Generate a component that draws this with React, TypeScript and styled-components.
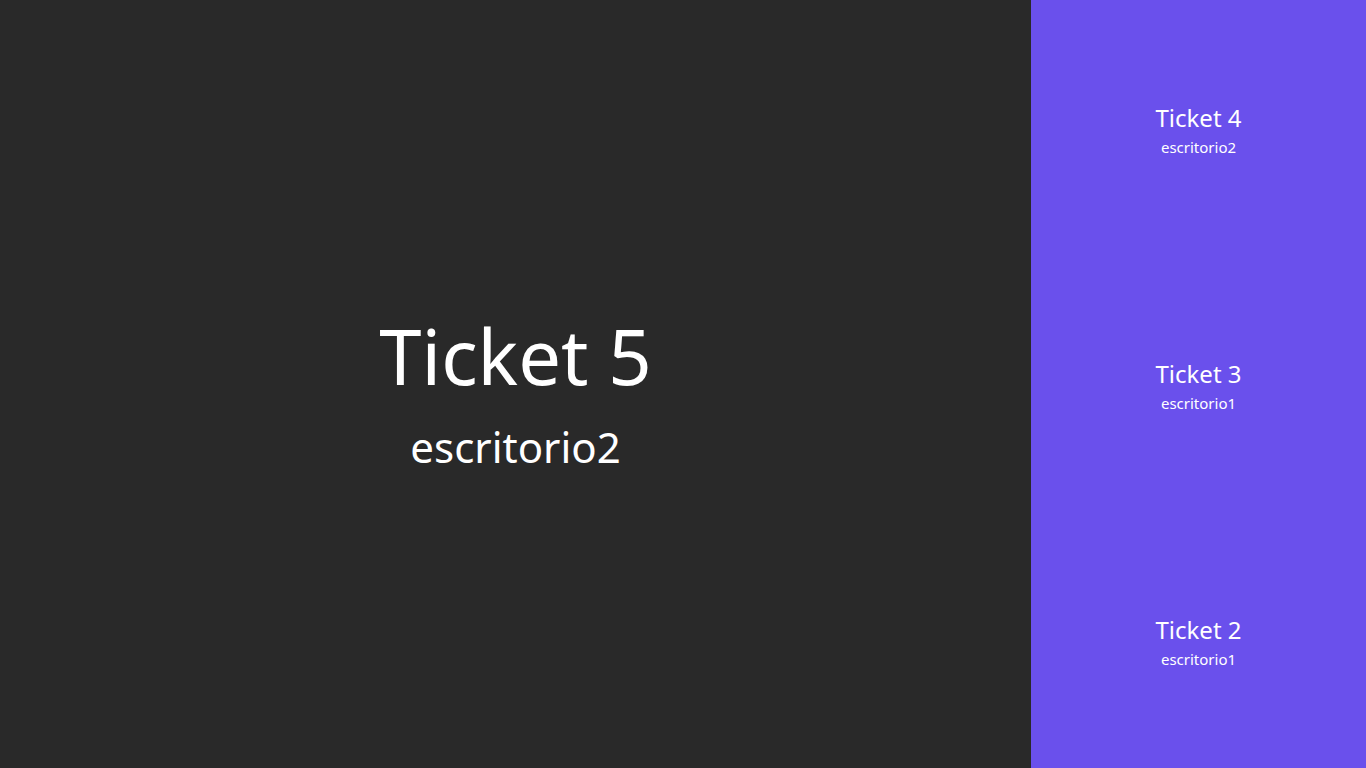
import React from "react";
import styled, { createGlobalStyle } from "styled-components";

const Global = createGlobalStyle`
  html, body { margin: 0; padding: 0; }
  body { font-family: "Segoe UI", "Noto Sans", "Open Sans", sans-serif; }
`;

const Page = styled.div`
  display: flex;
  width: 100vw;
  height: 100vh;
  overflow: hidden;
`;

const Main = styled.div`
  flex: 0 0 1031px;
  background: #292929;
  display: flex;
  flex-direction: column;
  align-items: center;
  justify-content: center;
  color: #ffffff;
  padding-top: 18px;
  box-sizing: border-box;
`;

const BigTitle = styled.div`
  font-size: 76px;
  line-height: 1;
  font-weight: 400;
`;

const BigSub = styled.div`
  font-size: 42px;
  line-height: 1;
  margin-top: 32px;
`;

const Side = styled.div`
  flex: 1;
  background: #6a50ec;
  display: grid;
  grid-template-rows: repeat(3, 1fr);
  color: #ffffff;
`;

const Item = styled.div`
  display: flex;
  flex-direction: column;
  align-items: center;
  justify-content: center;
  padding-top: 5px;
`;

const ItemTitle = styled.div`
  font-size: 24px;
  line-height: 1.2;
`;

const ItemSub = styled.div`
  font-size: 15px;
  line-height: 1.3;
  margin-top: 5px;
`;

const items = [
  { t: "Ticket 4", e: "escritorio2" },
  { t: "Ticket 3", e: "escritorio1" },
  { t: "Ticket 2", e: "escritorio1" },
];

export default function App() {
  return (
    <>
      <Global />
      <Page>
        <Main>
          <BigTitle>Ticket 5</BigTitle>
          <BigSub>escritorio2</BigSub>
        </Main>
        <Side>
          {items.map((i) => (
            <Item key={i.t}>
              <ItemTitle>{i.t}</ItemTitle>
              <ItemSub>{i.e}</ItemSub>
            </Item>
          ))}
        </Side>
      </Page>
    </>
  );
}
